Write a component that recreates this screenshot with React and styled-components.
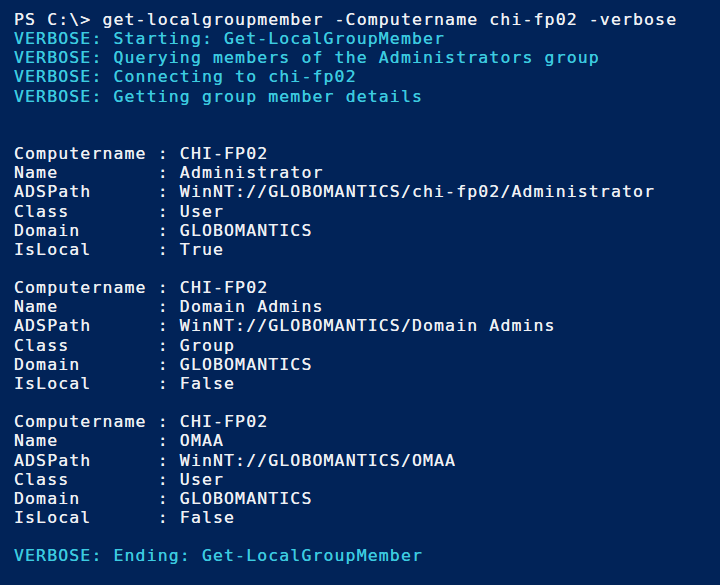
import React from "react";
import styled, { createGlobalStyle } from "styled-components";

const blocks = [
  [
    ["Computername", "CHI-FP02"],
    ["Name", "Administrator"],
    ["ADSPath", "WinNT://GLOBOMANTICS/chi-fp02/Administrator"],
    ["Class", "User"],
    ["Domain", "GLOBOMANTICS"],
    ["IsLocal", "True"],
  ],
  [
    ["Computername", "CHI-FP02"],
    ["Name", "Domain Admins"],
    ["ADSPath", "WinNT://GLOBOMANTICS/Domain Admins"],
    ["Class", "Group"],
    ["Domain", "GLOBOMANTICS"],
    ["IsLocal", "False"],
  ],
  [
    ["Computername", "CHI-FP02"],
    ["Name", "OMAA"],
    ["ADSPath", "WinNT://GLOBOMANTICS/OMAA"],
    ["Class", "User"],
    ["Domain", "GLOBOMANTICS"],
    ["IsLocal", "False"],
  ],
];

const verbose = [
  "Starting: Get-LocalGroupMember",
  "Querying members of the Administrators group",
  "Connecting to chi-fp02",
  "Getting group member details",
];

function App() {
  return (
    <>
      <GlobalStyle />
      <Console>
        <Line>PS C:\&gt; get-localgroupmember -Computername chi-fp02 -verbose</Line>
        {verbose.map((msg) => (
          <Line key={msg} $tone="verbose">
            VERBOSE: {msg}
          </Line>
        ))}
        <Line />
        <Line />
        {blocks.map((block, i) => (
          <Block key={i}>
            {block.map(([key, value]) => (
              <Line key={key}>
                {key.padEnd(12, " ")} : {value}
              </Line>
            ))}
            <Line />
          </Block>
        ))}
        <Line $tone="verbose">VERBOSE: Ending: Get-LocalGroupMember</Line>
      </Console>
    </>
  );
}

const GlobalStyle = createGlobalStyle`
  html, body {
    margin: 0;
    padding: 0;
    background: #012358;
  }
`;

const Console = styled.div`
  width: 720px;
  height: 585px;
  box-sizing: border-box;
  padding: 10px 0 0 14px;
  background: #012358;
  font-family: "DejaVu Sans Mono", "Liberation Mono", monospace;
  font-size: 16.5px;
  letter-spacing: 1.12px;
  line-height: 19.15px;
  overflow: hidden;
`;

const Block = styled.div`
  display: flex;
  flex-direction: column;
`;

const Line = styled.div`
  white-space: pre;
  min-height: 19.15px;
  color: ${(p) => (p.$tone === "verbose" ? "#3ccbe0" : "#eef0f4")};
  text-shadow: 0 0 0.6px currentColor;
`;

export default App;
